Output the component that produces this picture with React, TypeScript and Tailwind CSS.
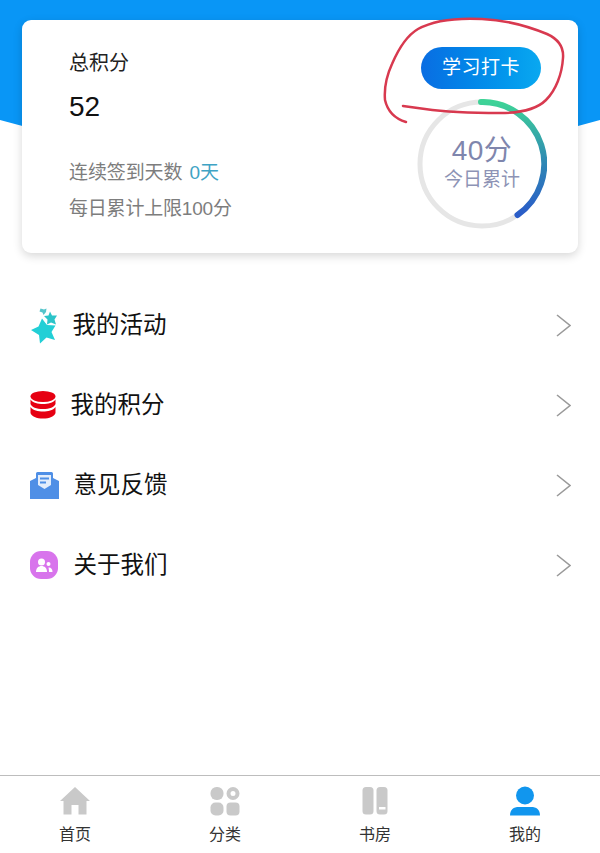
import React from "react";

const font = { fontFamily: '"Liberation Sans","Noto Sans CJK SC",sans-serif' };

function StarIcon() {
  return (
    <svg width="30" height="37" viewBox="0 0 30 37">
      <path d="M12 11.500L17 18 25.500 18.500 21.500 25 25 33 16.500 30.500 10 36.500 9 28 1 23 8.500 19.500z" fill="#22cfd6" />
      <path d="M20 4.500L22 8.500 27 8.500 24.500 12.500 26 17.500 21 15.500 17 17.500 17.500 12.500 14 9 18.500 8.500z" fill="#2cc4c9" />
      <path d="M10.500 1.500L14 2.500 16.500 1.500 16 5 13.500 8 12.500 5.500 9.500 4.500z" fill="#55c5cb" />
    </svg>
  );
}

function DbIcon() {
  return (
    <svg width="26" height="28" viewBox="0 0 26 28">
      <ellipse cx="13" cy="5.500" rx="12.500" ry="5.500" fill="#e60012" />
      <path d="M.5 8.500C3 12 8 13 13 13s10-1 12.500-4.500V13c-1 3-6 5-12.500 5S1.500 16 .5 13z" fill="#e60012" />
      <path d="M.5 16C3 19.500 8 20.500 13 20.500S23 19.500 25.500 16v6c-1 3.500-6 5.500-12.500 5.500S1.500 25.500.5 22z" fill="#e60012" />
    </svg>
  );
}

function MailIcon() {
  return (
    <svg width="29" height="27" viewBox="0 0 29 27">
      <path d="M0 9l6-3V1.500Q6 0 7.500 0h14Q23 0 23 1.500V6l6 3v18H0z" fill="#4f8fe6" />
      <path d="M8 3h13v10l-6.500 4L8 13z" fill="#e3edfb" />
      <rect x="10" y="5.500" width="9" height="2" fill="#4f8fe6" />
      <rect x="10" y="9.500" width="6" height="2" fill="#4f8fe6" />
    </svg>
  );
}

function AboutIcon() {
  return (
    <svg width="28" height="28" viewBox="0 0 28 28">
      <rect width="28" height="28" rx="11" fill="#d874ec" />
      <circle cx="11.500" cy="11" r="3.500" fill="#fff" />
      <path d="M6 21c0-4 2.500-6 5.500-6s5.500 2 5.500 6z" fill="#fff" />
      <circle cx="18.500" cy="13" r="2" fill="#fff" />
      <path d="M19 16.500c2 0 3.500 1.500 3.500 4.500h-3.500c0-1.500-.2-3-.5-4.500z" fill="#fff" />
    </svg>
  );
}

function HomeIcon() {
  return (
    <svg width="30" height="30" viewBox="0 0 30 30">
      <path d="M15 1l15 14h-3.500v13.500H18.500V19h-7v9.500H3.500V15H0z" fill="#c9c9c9" />
    </svg>
  );
}

function GridIcon() {
  return (
    <svg width="30" height="30" viewBox="0 0 30 30">
      <rect x="0.500" y="1" width="13" height="13" rx="6" fill="#c9c9c9" />
      <circle cx="23" cy="7.500" r="4.500" fill="none" stroke="#c9c9c9" strokeWidth="4" />
      <rect x="0.500" y="16.500" width="13" height="13" rx="5" fill="#c9c9c9" />
      <rect x="16.500" y="16.500" width="13" height="13" rx="4" fill="#c9c9c9" />
    </svg>
  );
}

function BookIcon() {
  return (
    <svg width="26" height="28" viewBox="0 0 26 28">
      <rect x="0.500" y="0" width="11" height="27.500" rx="3.500" fill="#c9c9c9" />
      <rect x="14.500" y="0" width="11" height="27.500" rx="3.500" fill="#c9c9c9" />
      <rect x="17" y="20" width="6.500" height="2.500" fill="#fff" />
    </svg>
  );
}

function UserIcon() {
  return (
    <svg width="30" height="30" viewBox="0 0 30 30">
      <circle cx="15" cy="9.500" r="9" fill="#1196ee" />
      <path d="M0 29.500c0-6 3.500-8.500 9-8.500h12c5.500 0 9 2.500 9 8.500z" fill="#1196ee" />
    </svg>
  );
}

function Chevron() {
  return (
    <svg width="15" height="23" viewBox="0 0 15 23">
      <path d="M1 1L14 11.500 1 22" fill="none" stroke="#9a9a9a" strokeWidth="1.600" />
    </svg>
  );
}

const menu = [
  { label: "我的活动", icon: <StarIcon />, iconBox: "w-[43px]" },
  { label: "我的积分", icon: <DbIcon />, iconBox: "w-[41px]" },
  { label: "意见反馈", icon: <MailIcon />, iconBox: "w-[44px]" },
  { label: "关于我们", icon: <AboutIcon />, iconBox: "w-[44px]" },
];

const tabs = [
  { label: "首页", icon: <HomeIcon /> },
  { label: "分类", icon: <GridIcon /> },
  { label: "书房", icon: <BookIcon /> },
  { label: "我的", icon: <UserIcon /> },
];

export default function App() {
  return (
    <div className="relative w-[600px] h-[853px] bg-white flex flex-col overflow-hidden" style={font}>
      <svg className="absolute left-0 top-0" width="600" height="170" viewBox="0 0 600 170">
        <path d="M0 120Q300 205 600 120V0H0z" fill="#0996f6" />
      </svg>

      <div className="relative mt-[20px] mx-[22px] h-[233px] shrink-0 bg-white rounded-[9px] shadow-[0_3px_10px_rgba(0,0,0,0.16)] flex justify-between">
        <div className="pl-[47px] pt-[30px] flex flex-col">
          <div className="text-[20px] leading-[26px] text-[#222]">总积分</div>
          <div className="mt-[15px] text-[28px] leading-[32px] text-[#111]">52</div>
          <div className="mt-[37px] text-[19px] leading-[26px] text-[#7d7d7d] flex">
            <span className="tracking-[-0.1px]">连续签到天数</span>
            <span className="ml-[7px] text-[#3ea3c4]">0天</span>
          </div>
          <div className="mt-[10px] text-[19px] leading-[26px] text-[#7d7d7d] tracking-[-0.2px]">每日累计上限100分</div>
        </div>

        <div className="pt-[27px] flex flex-col items-center w-[156px]">
          <div className="w-[120px] -ml-[38px] h-[42px] rounded-full bg-gradient-to-r from-[#0a6de2] to-[#0aa8f0] flex items-center justify-center text-white text-[19px] tracking-[0.5px]">
            学习打卡
          </div>
          <div className="relative mt-[10px] -ml-[36px] w-[130px] h-[130px] flex flex-col items-center justify-center">
            <svg className="absolute inset-0" width="130" height="130" viewBox="0 0 130 130">
              <defs>
                <linearGradient id="ring" x1="0" y1="0" x2="0" y2="1">
                  <stop offset="0" stopColor="#3ed397" />
                  <stop offset="0.55" stopColor="#2e86b5" />
                  <stop offset="1" stopColor="#2a5cc8" />
                </linearGradient>
              </defs>
              <circle cx="65" cy="65" r="62" fill="none" stroke="#e6e6e6" strokeWidth="5" />
              <path d="M64 3A62 62 0 0 1 100.500 116" fill="none" stroke="url(#ring)" strokeWidth="6" strokeLinecap="round" />
            </svg>
            <div className="text-[28px] leading-[34px] text-[#7f86ad] tracking-[0.5px] -mt-[2px]">40分</div>
            <div className="text-[19px] leading-[24px] text-[#8d93b5]">今日累计</div>
          </div>
        </div>
      </div>

      <div className="relative mt-[32px] flex flex-col flex-1">
        {menu.map((m) => (
          <div key={m.label} className="h-[80px] pl-[29.500px] pr-[29px] flex items-center">
            <div className={`${m.iconBox} flex items-center`}>{m.icon}</div>
            <div className="flex-1 pt-[2px] text-[23.500px] text-[#111]">{m.label}</div>
            <Chevron />
          </div>
        ))}
      </div>

      <div className="relative h-[78px] shrink-0 border-t border-[#bdbdbd] bg-white flex">
        {tabs.map((t) => (
          <div key={t.label} className="flex-1 flex flex-col items-center pt-[10px]">
            <div className="h-[30px] flex items-center justify-center">{t.icon}</div>
            <div className="mt-[9px] text-[16px] leading-[20px] text-[#333]">{t.label}</div>
          </div>
        ))}
      </div>

      <svg className="absolute left-0 top-0 pointer-events-none" width="600" height="140" viewBox="0 0 600 140">
        <path
          d="M406 122C396 119 388 113 385 100C384 88 386 77 392 64C398 50 406 36 418 29C436 19 462 18 482 19C506 20 530 27 547 34C558 39 564 46 563 58C562 74 556 90 546 100C536 110 520 113 500 113C474 113 446 112 425 109L403 106"
          fill="none"
          stroke="#d8394f"
          strokeWidth="2.500"
          strokeLinecap="round"
        />
      </svg>
    </div>
  );
}
